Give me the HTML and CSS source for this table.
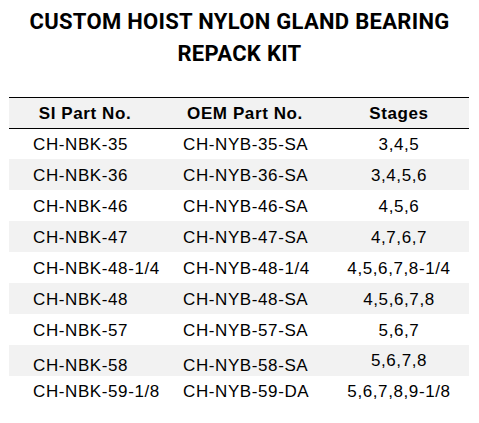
FILE: index.html
```html
<!DOCTYPE html>
<html>
<head>
<meta charset="utf-8">
<link rel="stylesheet" href="styles.css">
</head>
<body>
<h1 class="title">CUSTOM HOIST NYLON GLAND BEARING<br>REPACK KIT</h1>
<table class="kit">
  <thead>
    <tr><th class="c1">SI Part No.</th><th class="c2">OEM Part No.</th><th class="c3">Stages</th></tr>
  </thead>
  <tbody>
    <tr class="first"><td class="c1">CH-NBK-35</td><td class="c2">CH-NYB-35-SA</td><td class="c3">3,4,5</td></tr>
    <tr class="shade"><td class="c1">CH-NBK-36</td><td class="c2">CH-NYB-36-SA</td><td class="c3">3,4,5,6</td></tr>
    <tr><td class="c1">CH-NBK-46</td><td class="c2">CH-NYB-46-SA</td><td class="c3">4,5,6</td></tr>
    <tr class="shade"><td class="c1">CH-NBK-47</td><td class="c2">CH-NYB-47-SA</td><td class="c3">4,7,6,7</td></tr>
    <tr><td class="c1">CH-NBK-48-1/4</td><td class="c2">CH-NYB-48-1/4</td><td class="c3">4,5,6,7,8-1/4</td></tr>
    <tr class="shade"><td class="c1">CH-NBK-48</td><td class="c2">CH-NYB-48-SA</td><td class="c3">4,5,6,7,8</td></tr>
    <tr><td class="c1">CH-NBK-57</td><td class="c2">CH-NYB-57-SA</td><td class="c3">5,6,7</td></tr>
    <tr class="shade low"><td class="c1">CH-NBK-58</td><td class="c2">CH-NYB-58-SA</td><td class="c3">5,6,7,8</td></tr>
    <tr class="last"><td class="c1">CH-NBK-59-1/8</td><td class="c2">CH-NYB-59-DA</td><td class="c3">5,6,7,8,9-1/8</td></tr>
  </tbody>
</table>
</body>
</html>
```
FILE: styles.css
```css
html, body {
  margin: 0;
  padding: 0;
  background: #ffffff;
}
body {
  width: 479px;
  height: 423px;
  overflow: hidden;
  color: #000;
}
.title {
  margin: 6px 0 0 0;
  font-family: Roboto, "Liberation Sans", sans-serif;
  font-weight: 700;
  font-size: 22px;
  line-height: 32px;
  text-align: center;
  letter-spacing: 0.3px;
}
.kit {
  margin: 27px 0 0 9px;
  width: 460px;
  border-collapse: collapse;
  font-family: "Liberation Sans", Arial, sans-serif;
  font-size: 17px;
  letter-spacing: 0.6px;
  line-height: 18px;
  table-layout: fixed;
}
.kit th, .kit td {
  padding: 8px 0 5px 0;
  white-space: nowrap;
}
.kit thead tr {
  background: #f2f2f2;
  border-top: 1px solid #000;
  border-bottom: 1px solid #000;
}
.kit th {
  font-weight: 700;
  text-align: center;
  padding: 7px 0 5px 0;
}
.kit th.c1 { width: 152px; }
.kit th.c2 { width: 168px; }
.kit th.c3 { width: 140px; }
.kit td.c1 { padding-left: 24px; text-align: left; }
.kit td.c2 { padding-left: 22px; text-align: left; }
.kit td.c3 { text-align: center; }
.kit tr.first td { padding-top: 7px; }
.kit tr.shade { background: #f2f2f2; }
.kit tr.low td.c1, .kit tr.low td.c2 { padding-top: 12px; padding-bottom: 1px; }
.kit tr.low td.c3 { padding-top: 7px; padding-bottom: 6px; vertical-align: top; }
.kit tr.last td { padding-top: 7px; padding-bottom: 6px; }
```
